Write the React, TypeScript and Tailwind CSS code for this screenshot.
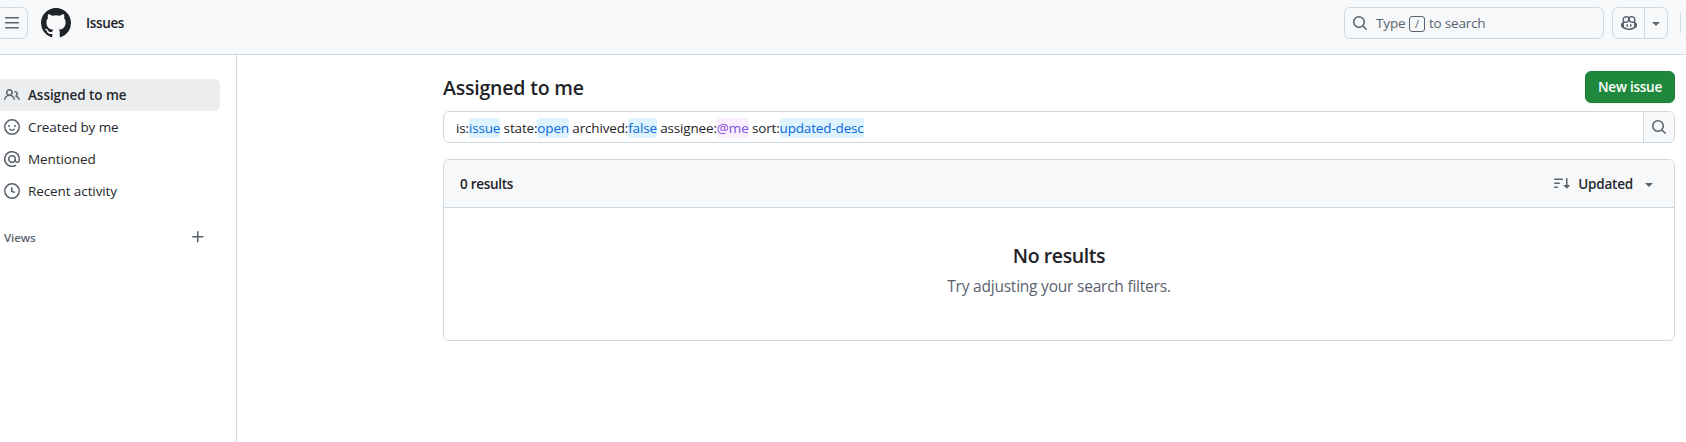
import type { ReactNode } from 'react'

const paths = {
  bars: 'M1 2.75A.75.75 0 0 1 1.75 2h12.5a.75.75 0 0 1 0 1.5H1.75A.75.75 0 0 1 1 2.75Zm0 5A.75.75 0 0 1 1.75 7h12.5a.75.75 0 0 1 0 1.5H1.75A.75.75 0 0 1 1 7.75ZM1.75 12h12.5a.75.75 0 0 1 0 1.5H1.75a.75.75 0 0 1 0-1.5Z',
  github:
    'M8 0c4.42 0 8 3.58 8 8a8.013 8.013 0 0 1-5.45 7.59c-.4.08-.55-.17-.55-.38 0-.27.01-1.13.01-2.2 0-.75-.25-1.23-.54-1.48 1.78-.2 3.65-.88 3.65-3.95 0-.88-.31-1.59-.82-2.15.08-.2.36-1.02-.08-2.12 0 0-.67-.22-2.2.82-.64-.18-1.32-.27-2-.27-.68 0-1.36.09-2 .27-1.53-1.03-2.2-.82-2.2-.82-.44 1.1-.16 1.92-.08 2.12-.51.56-.82 1.28-.82 2.15 0 3.06 1.86 3.75 3.64 3.95-.23.2-.44.55-.51 1.07-.46.21-1.61.55-2.33-.66-.15-.24-.6-.83-1.23-.82-.67.01-.27.38.01.53.34.19.73.9.82 1.13.16.45.68 1.31 2.69.94 0 .67.01 1.3.01 1.49 0 .21-.15.45-.55.38A7.995 7.995 0 0 1 0 8c0-4.42 3.58-8 8-8Z',
  search:
    'M10.68 11.74a6 6 0 0 1-7.922-8.982 6 6 0 0 1 8.982 7.922l3.04 3.04a.749.749 0 0 1-.326 1.275.749.749 0 0 1-.734-.215ZM11.5 7a4.499 4.499 0 1 0-8.997 0A4.499 4.499 0 0 0 11.5 7Z',
  people:
    'M2 5.5a3.5 3.5 0 1 1 5.898 2.549 5.508 5.508 0 0 1 3.034 4.084.75.75 0 1 1-1.482.235 4 4 0 0 0-7.9 0 .75.75 0 0 1-1.482-.236A5.507 5.507 0 0 1 3.102 8.05 3.493 3.493 0 0 1 2 5.5ZM11 4a3.001 3.001 0 0 1 2.22 5.018 5.01 5.01 0 0 1 2.56 3.012.749.749 0 0 1-.885.954.752.752 0 0 1-.549-.514 3.507 3.507 0 0 0-2.522-2.372.75.75 0 0 1-.574-.73v-.352a.75.75 0 0 1 .416-.672A1.5 1.5 0 0 0 11 5.5.75.75 0 0 1 11 4Zm-5.5-.5a2 2 0 1 0-.001 3.999A2 2 0 0 0 5.5 3.5Z',
  smiley:
    'M8 0a8 8 0 1 1 0 16A8 8 0 0 1 8 0ZM1.5 8a6.5 6.5 0 1 0 13 0 6.5 6.5 0 0 0-13 0Zm3.82 1.636a.75.75 0 0 1 1.038.175l.007.009c.103.118.22.222.35.31.264.178.683.37 1.285.37.602 0 1.02-.192 1.285-.371.13-.088.247-.192.35-.31l.007-.008a.75.75 0 0 1 1.222.87l-.022-.015c.02.013.021.015.021.015v.001l-.001.002-.002.003-.005.007-.014.019a2.066 2.066 0 0 1-.184.213c-.16.166-.338.316-.53.445-.63.418-1.37.638-2.127.629-.946 0-1.652-.308-2.126-.63a3.331 3.331 0 0 1-.715-.657l-.014-.02-.005-.006-.002-.003v-.002h-.001l.613-.432-.614.43a.75.75 0 0 1 .183-1.044ZM12 7a1 1 0 1 1-2 0 1 1 0 0 1 2 0ZM5 8a1 1 0 1 1 0-2 1 1 0 0 1 0 2Zm5.25 2.25.592.416a97.71 97.71 0 0 0-.592-.416Z',
  mention:
    'M4.75 2.37a6.501 6.501 0 0 0 6.5 11.26.75.75 0 0 1 .75 1.298A7.999 7.999 0 0 1 .989 4.148 8 8 0 0 1 16 7.75v1.5a2.75 2.75 0 0 1-5.072 1.475 3.999 3.999 0 0 1-6.65-4.19A4 4 0 0 1 12 8v1.25a1.25 1.25 0 0 0 2.5 0V7.867a6.5 6.5 0 0 0-9.75-5.496ZM10.5 8a2.5 2.5 0 1 0-5 0 2.5 2.5 0 0 0 5 0Z',
  clock:
    'M8 0a8 8 0 1 1 0 16A8 8 0 0 1 8 0ZM1.5 8a6.5 6.5 0 1 0 13 0 6.5 6.5 0 0 0-13 0Zm7-3.25v2.992l2.028.812a.75.75 0 0 1-.557 1.392l-2.5-1A.751.751 0 0 1 7 8.25v-3.5a.75.75 0 0 1 1.5 0Z',
  plus: 'M7.75 2a.75.75 0 0 1 .75.75V7h4.25a.75.75 0 0 1 0 1.5H8.5v4.25a.75.75 0 0 1-1.5 0V8.5H2.75a.75.75 0 0 1 0-1.5H7V2.75A.75.75 0 0 1 7.75 2Z',
  triangle: 'm4.427 7.427 3.396 3.396a.25.25 0 0 0 .354 0l3.396-3.396A.25.25 0 0 0 11.396 7H4.604a.25.25 0 0 0-.177.427Z',
  sort: 'M0 4.25a.75.75 0 0 1 .75-.75h7.5a.75.75 0 0 1 0 1.5H.75A.75.75 0 0 1 0 4.25Zm0 4a.75.75 0 0 1 .75-.75h4.5a.75.75 0 0 1 0 1.5H.75A.75.75 0 0 1 0 8.25Zm0 4a.75.75 0 0 1 .75-.75h2.5a.75.75 0 0 1 0 1.5H.75a.75.75 0 0 1-.75-.75ZM13.5 10h2.25a.25.25 0 0 1 .177.427l-3 3a.25.25 0 0 1-.354 0l-3-3A.25.25 0 0 1 9.75 10H12V3.75a.75.75 0 0 1 1.5 0V10Z',
  copilot:
    'M7.998 15.035c-4.562 0-7.873-2.914-7.998-3.749V9.338c.085-.628.677-1.686 1.588-2.065.013-.07.024-.143.036-.218.029-.183.06-.384.126-.612-.201-.508-.254-1.084-.254-1.656 0-.87.128-1.769.693-2.484.579-.733 1.494-1.124 2.724-1.261 1.206-.134 2.262.034 2.944.765.05.053.096.108.139.165.044-.057.094-.112.143-.165.682-.731 1.738-.899 2.944-.765 1.23.137 2.145.528 2.724 1.261.566.715.693 1.614.693 2.484 0 .572-.053 1.148-.254 1.656.066.228.098.429.126.612.012.076.024.148.037.218.924.385 1.522 1.471 1.591 2.095v1.872c0 .766-3.351 3.795-8.002 3.795Zm0-1.485c2.28 0 4.584-1.11 5.002-1.433V7.862l-.023-.116c-.49.21-1.075.291-1.727.291-1.146 0-2.059-.327-2.71-.991A3.222 3.222 0 0 1 8 6.303a3.24 3.24 0 0 1-.544.743c-.65.664-1.563.991-2.71.991-.652 0-1.236-.081-1.727-.291l-.023.116v4.255c.419.323 2.722 1.433 5.002 1.433ZM6.762 2.83c-.193-.206-.637-.413-1.682-.297-1.019.113-1.479.404-1.713.7-.247.312-.369.789-.369 1.554 0 .793.129 1.171.308 1.371.162.181.519.379 1.442.379.853 0 1.339-.235 1.638-.54.315-.322.527-.827.617-1.553.117-.935-.037-1.395-.241-1.614Zm4.155-.297c-1.044-.116-1.488.091-1.681.297-.204.219-.359.679-.242 1.614.091.726.303 1.231.618 1.553.299.305.784.54 1.638.54.922 0 1.28-.198 1.442-.379.179-.2.308-.578.308-1.371 0-.765-.123-1.242-.37-1.554-.233-.296-.693-.587-1.713-.7ZM6.25 9.037a.75.75 0 0 1 .75.75v1.501a.75.75 0 0 1-1.5 0V9.787a.75.75 0 0 1 .75-.75Zm4.25.75v1.501a.75.75 0 0 1-1.5 0V9.787a.75.75 0 0 1 1.5 0Z',
}

function Icon({ name, className = 'size-4' }: { name: keyof typeof paths; className?: string }) {
  return (
    <svg viewBox="0 0 16 16" fill="currentColor" className={`shrink-0 ${className}`} aria-hidden="true">
      <path d={paths[name]} />
    </svg>
  )
}

function Header() {
  return (
    <header className="flex h-[55px] items-start border-b border-[#d1d9e0] bg-[#f6f8fa] pt-[7px] text-[#59636e]">
      <button className="-ml-1 flex size-8 items-center justify-center rounded-md border border-[#d1d9e0]">
        <Icon name="bars" />
      </button>
      <Icon name="github" className="mt-px ml-[13px] size-[30px] text-[#1f2328]" />
      <span className="ml-[15px] text-[13.5px] leading-8 font-semibold tracking-[-0.35px] text-[#1f2328]">Issues</span>
      <div className="ml-auto flex h-8 w-[260px] items-center rounded-md border border-[#d1d9e0] pl-[7px]">
        <Icon name="search" />
        <span className="ml-2 text-[13.5px] tracking-[-0.15px]">Type</span>
        <kbd className="mr-1 ml-[3.5px] mt-px flex size-4 items-center justify-center rounded-[3px] border border-[#59636e] font-['Open_Sans',sans-serif] text-[11px] leading-none">
          /
        </kbd>
        <span className="text-[13.5px] tracking-[-0.2px]">to search</span>
      </div>
      <div className="ml-2 flex h-8 w-14 rounded-md border border-[#d1d9e0]">
        <button className="flex w-8 items-center justify-center border-r border-[#d1d9e0]">
          <Icon name="copilot" />
        </button>
        <button className="flex flex-1 items-center justify-center">
          <Icon name="triangle" />
        </button>
      </div>
      <div className="mt-1.5 mr-[5px] ml-3 h-5 w-px bg-[#d1d9e0]" />
    </header>
  )
}

function NavItem({ icon, active, children }: { icon: keyof typeof paths; active?: boolean; children: ReactNode }) {
  return (
    <li
      className={
        active
          ? 'flex h-8 items-center gap-2 rounded-r-md bg-[#ecedef] pl-1 text-[13.5px] font-semibold tracking-[-0.06px] text-[#25292e]'
          : 'flex h-8 items-center gap-2 pl-1 text-[13.5px] tracking-[-0.1px] text-[#25292e]'
      }
    >
      <span className="flex text-[#59636e]">
        <Icon name={icon} />
      </span>
      {children}
    </li>
  )
}

function Sidebar() {
  return (
    <aside className="w-[237px] shrink-0 border-r border-[#d1d9e0] pt-6 pr-4 text-[#1f2328]">
      <ul>
        <NavItem icon="people" active>
          Assigned to me
        </NavItem>
        <NavItem icon="smiley">Created by me</NavItem>
        <NavItem icon="mention">Mentioned</NavItem>
        <NavItem icon="clock">Recent activity</NavItem>
      </ul>
      <div className="mt-3.5 flex h-8 items-center justify-between pr-3.5 pl-1 text-[#59636e]">
        <h3 className="pt-0.5 text-[11.5px] font-semibold tracking-[-0.1px]">Views</h3>
        <Icon name="plus" />
      </div>
    </aside>
  )
}

function Token({ children, user }: { children: ReactNode; user?: boolean }) {
  return (
    <span
      className={
        user ? 'rounded-[3px] bg-[#fbefff] py-px text-[#8250df]' : 'rounded-[3px] bg-[#ddf4ff] py-px text-[#0969da]'
      }
    >
      {children}
    </span>
  )
}

function Main() {
  return (
    <main className="flex-1 pt-4 pr-[11px] pl-[206px] text-[#1f2328]">
      <div className="flex h-8 items-center justify-between">
        <h1 className="pt-0.5 text-[19.5px] font-semibold tracking-[-0.2px]">Assigned to me</h1>
        <button className="h-8 w-[90px] rounded-md border border-[#1f7d38] bg-[#1f883d] text-[13.5px] font-semibold tracking-[-0.25px] text-white shadow-xs">
          New issue
        </button>
      </div>
      <div className="mt-2 flex h-8 overflow-hidden rounded-md border border-[#d1d9e0]">
        <div className="flex-1 pt-px pl-3 text-[13.5px] leading-[30px] tracking-[-0.16px] whitespace-pre">
          is:<Token>issue</Token> state:<Token>open</Token> archived:<Token>false</Token> assignee:
          <Token user>@me</Token> sort:<Token>updated-desc</Token>
        </div>
        <button className="flex w-[31px] items-center justify-center border-l border-[#d1d9e0] bg-[#f6f8fa] text-[#59636e]">
          <Icon name="search" />
        </button>
      </div>
      <section className="mt-4 h-[182px] overflow-hidden rounded-md border border-[#d1d9e0]">
        <div className="flex h-12 items-center border-b border-[#d1d9e0] bg-[#f6f8fa] pr-[17px] pl-4 text-[13.5px] font-semibold">
          <span className="pt-0.5 tracking-[-0.3px]">0 results</span>
          <span className="ml-auto flex items-center text-[#59636e]">
            <Icon name="sort" className="mb-px size-4" />
            <span className="ml-2 pt-0.5 tracking-[-0.2px] text-[#25292e]">Updated</span>
            <Icon name="triangle" className="ml-2 size-4" />
          </span>
        </div>
        <div className="flex flex-col items-center pt-[33px]">
          <h2 className="text-[19.5px] leading-[30px] font-semibold tracking-[-0.4px]">No results</h2>
          <p className="mt-[3px] text-[15.5px] leading-6 tracking-[-0.22px] text-[#59636e]">Try adjusting your search filters.</p>
        </div>
      </section>
    </main>
  )
}

export default function App() {
  return (
    <div className="flex h-[442px] flex-col overflow-hidden bg-white font-['Open_Sans',sans-serif]">
      <Header />
      <div className="flex flex-1">
        <Sidebar />
        <Main />
      </div>
    </div>
  )
}
